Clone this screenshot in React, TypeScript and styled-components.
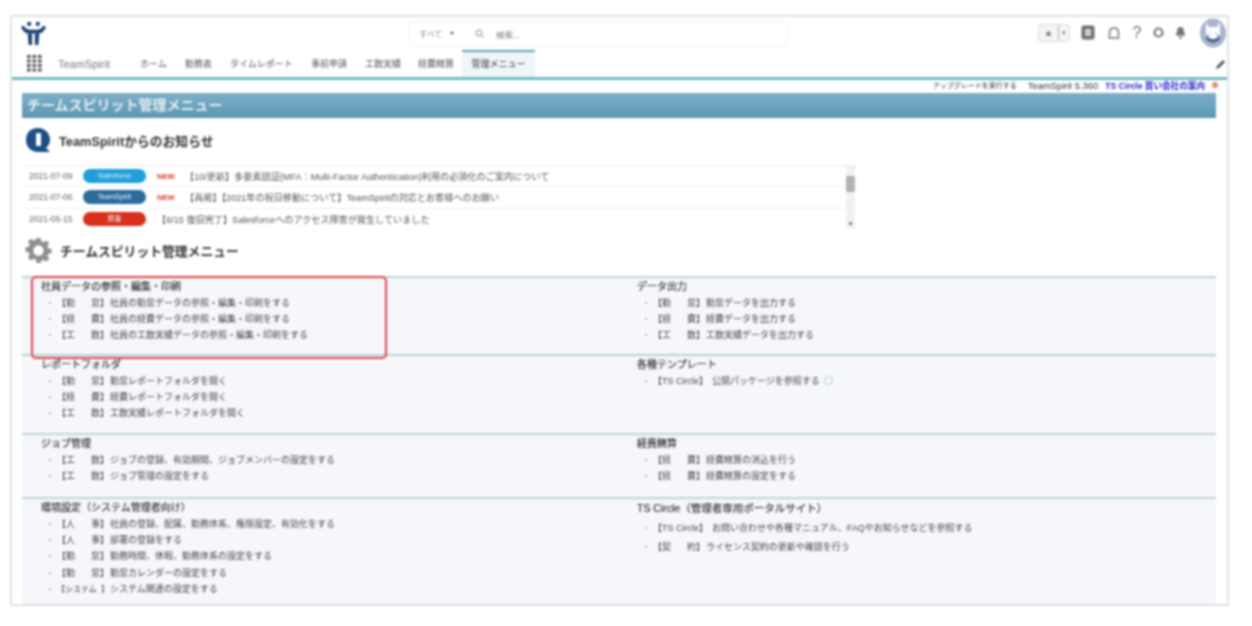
import React from "react";
import styled, { createGlobalStyle } from "styled-components";

const Global = createGlobalStyle`
  html, body { margin: 0; padding: 0; background: #fff; }
  body { font-family: "Liberation Sans", "Noto Sans CJK JP", sans-serif; overflow: hidden; }
`;

const Page = styled.div`
  width: 1252px;
  height: 626px;
  padding: 15px 0 0 10px;
  box-sizing: border-box;
  position: relative;
  filter: blur(1.05px);
`;
const Frame = styled.div`
  width: 1219px;
  height: 591px;
  box-sizing: border-box;
  border: 2px solid #e2e2e2;
  display: flex;
  flex-direction: column;
  overflow: hidden;
`;
const TopBar = styled.header`
  height: 33px;
  display: grid;
  grid-template-columns: 396px 380px 1fr;
  align-items: center;
  box-sizing: border-box;
`;
const Logo = styled.div`
  padding-left: 8px;
  display: flex;
  align-items: center;
`;
const Search = styled.div`
  height: 25px;
  border: 1px solid #f4f4f4;
  border-radius: 3px;
  display: flex;
  align-items: center;
  font-size: 8px;
  color: #8a8a8a;
  background: #fff;
  box-sizing: border-box;
`;
const ScopeLabel = styled.span`
  margin-left: 10px;
  width: 31px;
`;
const Caret = styled.span`
  width: 0;
  height: 0;
  border-left: 2.5px solid transparent;
  border-right: 2.5px solid transparent;
  border-top: 3.5px solid #555;
  margin-right: 21px;
`;
const SearchText = styled.span`
  margin-left: 11px;
  font-size: 8.5px;
  color: #777;
`;
const Tools = styled.div`
  display: flex;
  align-items: center;
  justify-content: flex-end;
  padding-bottom: 2px;
`;
const FavGroup = styled.div`
  width: 32px;
  height: 18px;
  border: 1px solid #ddd;
  border-radius: 3px;
  background: #f5f5f5;
  display: grid;
  grid-template-columns: 1fr 11px;
  align-items: center;
  justify-items: center;
  box-sizing: border-box;
  margin-right: 11px;
  color: #777;
  font-size: 8px;
`;
const FavDivider = styled.span`
  border-left: 1px solid #aaa;
  width: 100%;
  height: 14px;
  display: flex;
  align-items: center;
  justify-content: center;
  box-sizing: border-box;
  font-size: 7px;
`;
const Tool = styled.span<{ $w: number; $ml?: number }>`
  width: ${(p) => p.$w}px;
  margin-left: ${(p) => p.$ml ?? 0}px;
  display: flex;
  justify-content: center;
  align-items: center;
  color: #727272;
  font-size: 16px;
`;
const NavRow = styled.nav`
  height: 27px;
  display: flex;
  align-items: stretch;
  position: relative;
`;
const Waffle = styled.div`
  margin-left: 15px;
  width: 15px;
  display: flex;
  align-items: center;
`;
const AppName = styled.span`
  margin-left: 16px;
  width: 82px;
  align-self: center;
  font-size: 11px;
  color: #777;
`;
const Tab = styled.span<{ $w: number; $active?: boolean }>`
  width: ${(p) => p.$w}px;
  box-sizing: border-box;
  display: flex;
  align-items: center;
  justify-content: ${(p) => (p.$active ? "center" : "flex-start")};
  font-size: 9px;
  color: ${(p) => (p.$active ? "#333" : "#555")};
  border-top: 2px solid ${(p) => (p.$active ? "#5ba4bd" : "transparent")};
  background: ${(p) => (p.$active ? "#eef6f9" : "transparent")};
  padding-bottom: 3px;
`;
const Pencil = styled.span`
  position: absolute;
  right: 2px;
  top: 10px;
  display: flex;
`;
const TealLine = styled.div`
  height: 3px;
  background: #74b9c2;
  flex: none;
`;
const VersionRow = styled.div`
  height: 13px;
  display: flex;
  justify-content: flex-end;
  align-items: center;
  gap: 11px;
  padding: 0 9px 3px 0;
  box-sizing: border-box;
  font-size: 7px;
  color: #333;
  flex: none;
`;
const VersionNumber = styled.span`
  font-size: 9.4px;
  margin-right: -4px;
`;
const VersionLink = styled.span`
  color: #2222cc;
  font-size: 8.6px;
  font-weight: 700;
`;
const Dot = styled.i`
  width: 6px;
  height: 6px;
  border-radius: 50%;
  background: #ef8b6e;
  margin-left: -4px;
`;
const TitleBar = styled.h1`
  margin: 0 11px 0 10px;
  height: 25px;
  flex: none;
  background: linear-gradient(#7fafc8, #5b97b5);
  color: #e4eef3;
  font-size: 14px;
  font-weight: 700;
  line-height: 25px;
  padding-left: 5px;
`;
const Heading = styled.div<{ $top: number; $bottom: number }>`
  display: flex;
  align-items: center;
  gap: 8px;
  margin: ${(p) => p.$top}px 0 ${(p) => p.$bottom}px 13px;
  height: 28px;
  font-size: 12.8px;
  font-weight: 700;
  color: #333;
  flex: none;
`;
const NewsBox = styled.div`
  width: 834px;
  margin-left: 12px;
  height: 64px;
  display: flex;
  flex: none;
  overflow: hidden;
  border-top: 1px solid #eee;
  box-sizing: border-box;
`;
const NewsList = styled.div`
  width: 822px;
`;
const NewsRow = styled.div`
  height: 21.3px;
  box-sizing: border-box;
  border-bottom: 1px solid #efefef;
  display: flex;
  align-items: center;
  padding-left: 5px;
  font-size: 9.15px;
  color: #555;
  white-space: nowrap;
`;
const NewsDate = styled.span`
  width: 54px;
  font-size: 8.5px;
  color: #666;
`;
const Pill = styled.span<{ $bg: string }>`
  width: 63px;
  height: 14px;
  border-radius: 7px;
  background: ${(p) => p.$bg};
  color: #e8f0f6;
  font-size: 7px;
  line-height: 14px;
  text-align: center;
  margin-right: 11px;
`;
const NewTag = styled.span`
  color: #d93a2b;
  font-size: 7.5px;
  font-weight: 700;
  width: 28px;
`;
const Scroll = styled.div`
  width: 9px;
  background: #f1f1f1;
  display: flex;
  flex-direction: column;
  align-items: stretch;
  padding: 10px 0 4px;
  box-sizing: border-box;
  justify-content: space-between;
`;
const Thumb = styled.div`
  height: 16px;
  background: #b2b2b2;
  border-radius: 1px;
`;
const ScrollArrow = styled.div`
  width: 3px;
  height: 3px;
  background: #888;
  align-self: center;
`;
const Sections = styled.div`
  margin: 1px 11px 0 10px;
  flex: 1;
  display: flex;
  flex-direction: column;
`;
const Section = styled.section<{ $h?: number; $line: string }>`
  ${(p) => (p.$h ? `height: ${p.$h}px; flex: none;` : "flex: 1;")}
  border-top: 2px solid ${(p) => p.$line};
  background: #f5f7fa;
  box-sizing: border-box;
  display: grid;
  grid-template-columns: 596px 1fr;
`;
const Col = styled.div`
  padding: 2px 0 0 19px;
`;
const ColTitle = styled.div<{ $big?: boolean }>`
  font-size: ${(p) => (p.$big ? "10.5px" : "10px")};
  margin-bottom: ${(p) => (p.$big ? "3px" : "0")};
  -webkit-text-stroke: 0.2px #333;
  color: #333;
  height: 14px;
  line-height: 14px;
`;
const Items = styled.ul`
  list-style: none;
  margin: 0;
  padding: 0 0 0 5px;
`;
const Item = styled.li<{ $h?: number }>`
  height: ${(p) => p.$h ?? 16.35}px;
  display: flex;
  align-items: center;
  font-size: 9px;
  color: #444;
  white-space: nowrap;
`;
const Bullet = styled.span`
  width: 11px;
  font-size: 8px;
  color: #888;
`;
const Tag = styled.span<{ $wide?: boolean; $tight?: boolean }>`
  width: ${(p) => (p.$wide ? "auto" : "52px")};
  margin-right: ${(p) => (p.$wide ? "4px" : "1px")};
  display: flex;
  justify-content: space-between;
  font-size: ${(p) => (p.$tight ? "8px" : "inherit")};
`;
const Ext = styled.span`
  width: 7px;
  height: 7px;
  border: 1px solid #a9d4c4;
  border-radius: 50%;
  margin-left: 4px;
`;
const RedBox = styled.div`
  position: absolute;
  left: 31px;
  top: 276px;
  width: 356px;
  height: 83px;
  box-sizing: border-box;
  border: 2px solid #e8404e;
  border-radius: 5px;
`;

type Row = { a?: string; b?: string; wide?: string; tight?: boolean; t: string; ext?: boolean };

const kin = { a: "【勤", b: "怠】" };
const kei = { a: "【経", b: "費】" };
const kou = { a: "【工", b: "数】" };
const jin = { a: "【人", b: "事】" };

const MenuItem = ({ r, h }: { r: Row; h?: number }) => (
  <Item $h={h}>
    <Bullet>・</Bullet>
    {r.wide ? (
      <Tag $wide>{r.wide}</Tag>
    ) : (
      <Tag $tight={r.tight}>
        <span>{r.a}</span>
        <span>{r.b}</span>
      </Tag>
    )}
    {r.t}
    {r.ext && <Ext />}
  </Item>
);

const Column = ({ title, rows, h, big }: { title: string; rows: Row[]; h?: number; big?: boolean }) => (
  <Col>
    <ColTitle $big={big}>{title}</ColTitle>
    <Items>
      {rows.map((r) => (
        <MenuItem key={r.t} r={r} h={h} />
      ))}
    </Items>
  </Col>
);

const Icon = styled.svg`
  display: block;
  flex: none;
`;

const TsLogo = () => (
  <Icon width="27" height="25" viewBox="0 0 28 26" fill="#1c3f6e">
    <circle cx="9.5" cy="3" r="2.2" />
    <circle cx="18.5" cy="3" r="2.2" />
    <path d="M1 6 L4 5 Q6 9 10 9 H18 Q22 9 24 5 L27 6 Q25 12 20 13 H8 Q3 12 1 6Z" />
    <path d="M8 13 H12.5 V25 H9 Z M15.5 13 H20 L19 25 H15.5 Z" />
  </Icon>
);

const Grid9 = () => (
  <Icon width="15" height="17" viewBox="0 0 15 17" fill="#555">
    {[0, 1, 2, 3].flatMap((y) =>
      [0, 1, 2].map((x) => <rect key={`${x}-${y}`} x={x * 5.5} y={y * 4.5} width="3.6" height="3" />)
    )}
  </Icon>
);

const InfoBubble = () => (
  <Icon width="26" height="26" viewBox="0 0 26 26">
    <path d="M13 1 C5 1 1 6 1 13 C1 20 6 25 13 25 L25 25 L21 21 C24 18 25 16 25 13 C25 6 20 1 13 1Z" fill="#1c4f85" />
    <rect x="11" y="6" width="5" height="13" rx="1" fill="#fff" />
  </Icon>
);

const Gear = () => (
  <Icon width="27" height="27" viewBox="0 0 24 24" fill="#8f8f8f">
    <path d="M10 1h4l.6 3.2 2.2.9 2.7-1.8 2.8 2.8-1.8 2.7.9 2.2 3.2.6v4l-3.2.6-.9 2.2 1.8 2.7-2.8 2.8-2.7-1.8-2.2.9L14 25h-4l-.6-3.2-2.2-.9-2.7 1.8-2.8-2.8 1.8-2.7-.9-2.2L-.6 14v-4l3.2-.6.9-2.2-1.8-2.7 2.8-2.8 2.7 1.8 2.2-.9z" transform="translate(1 0) scale(.92)" />
    <circle cx="12" cy="12" r="4.6" fill="#fff" />
  </Icon>
);

const SearchGlass = () => (
  <Icon width="10" height="10" viewBox="0 0 10 10" fill="none" stroke="#888" strokeWidth="1">
    <circle cx="4" cy="4" r="3" />
    <path d="M6.2 6.2 9 9" />
  </Icon>
);

const AddBox = () => (
  <Icon width="14" height="15" viewBox="0 0 14 15" fill="#6f6f6f">
    <rect x="0.5" y="0.5" width="13" height="14" rx="2" />
    <rect x="4" y="4" width="6" height="7" fill="#cfcfcf" />
  </Icon>
);

const Helper = () => (
  <Icon width="14" height="14" viewBox="0 0 14 14" fill="none" stroke="#777" strokeWidth="1.5">
    <path d="M2.5 12 V7 Q2.5 2 7 2 Q11.5 2 11.5 7 V12 Z" />
  </Icon>
);

const Cog = () => (
  <Icon width="13" height="13" viewBox="0 0 13 13" fill="none" stroke="#777" strokeWidth="2.2">
    <circle cx="6.5" cy="6.5" r="4" />
  </Icon>
);

const Bell = () => (
  <Icon width="13" height="13" viewBox="0 0 13 13" fill="#747474">
    <path d="M6.5 1 C4 1 3 3 3 6 L1.5 9.5 H11.5 L10 6 C10 3 9 1 6.5 1Z" />
    <rect x="5" y="10.5" width="3" height="2" />
  </Icon>
);

const Avatar = () => (
  <Icon width="26" height="30" viewBox="0 0 26 30">
    <ellipse cx="13" cy="15" rx="13" ry="14.5" fill="#a9b5cc" />
    <path d="M6 4 L9 9 H17 L20 4 V19 Q20 25 13 25 Q6 25 6 19Z" fill="#fff" />
    <ellipse cx="13" cy="20" rx="7" ry="5" fill="#4f6893" />
    <ellipse cx="13" cy="18" rx="5" ry="3" fill="#fff" />
  </Icon>
);

const PencilIcon = () => (
  <Icon width="9" height="9" viewBox="0 0 9 9" fill="#555">
    <path d="M7 0 L9 2 L3 8 L0 9 L1 6Z" />
  </Icon>
);

export default function App() {
  return (
    <>
      <Global />
      <Page>
        <Frame>
          <TopBar>
            <Logo>
              <TsLogo />
            </Logo>
            <Search>
              <ScopeLabel>すべて</ScopeLabel>
              <Caret />
              <SearchGlass />
              <SearchText>検索...</SearchText>
            </Search>
            <Tools>
              <FavGroup>
                ★<FavDivider>▾</FavDivider>
              </FavGroup>
              <Tool $w={14}>
                <AddBox />
              </Tool>
              <Tool $w={38}>
                <Helper />
              </Tool>
              <Tool $w={8}>?</Tool>
              <Tool $w={34}>
                <Cog />
              </Tool>
              <Tool $w={10}>
                <Bell />
              </Tool>
              <Tool $w={28} $ml={14}>
                <Avatar />
              </Tool>
            </Tools>
          </TopBar>
          <NavRow>
            <Waffle>
              <Grid9 />
            </Waffle>
            <AppName>TeamSpirit</AppName>
            <Tab $w={45}>ホーム</Tab>
            <Tab $w={45}>勤務表</Tab>
            <Tab $w={81}>タイムレポート</Tab>
            <Tab $w={54}>事前申請</Tab>
            <Tab $w={53}>工数実績</Tab>
            <Tab $w={44}>経費精算</Tab>
            <Tab $w={73} $active>
              管理メニュー
            </Tab>
            <Pencil>
              <PencilIcon />
            </Pencil>
          </NavRow>
          <TealLine />
          <VersionRow>
            <span>アップグレードを実行する</span>
            <VersionNumber>TeamSpirit 5.360</VersionNumber>
            <VersionLink>TS Circle 買い会社の案内</VersionLink>
            <Dot />
          </VersionRow>
          <TitleBar>チームスピリット管理メニュー</TitleBar>
          <Heading $top={8} $bottom={11}>
            <InfoBubble />
            TeamSpiritからのお知らせ
          </Heading>
          <NewsBox>
            <NewsList>
              <NewsRow>
                <NewsDate>2021-07-09</NewsDate>
                <Pill $bg="#1f9fdc">Salesforce</Pill>
                <NewTag>NEW</NewTag>
                【10/更新】多要素認証(MFA：Multi-Factor Authentication)利用の必須化のご案内について
              </NewsRow>
              <NewsRow>
                <NewsDate>2021-07-06</NewsDate>
                <Pill $bg="#2b6c9c">TeamSpirit</Pill>
                <NewTag>NEW</NewTag>
                【再掲】【2021年の祝日移動について】TeamSpiritの対応とお客様へのお願い
              </NewsRow>
              <NewsRow>
                <NewsDate>2021-06-15</NewsDate>
                <Pill $bg="#d9301c">障害</Pill>
                【6/15 復旧完了】Salesforceへのアクセス障害が発生していました
              </NewsRow>
            </NewsList>
            <Scroll>
              <Thumb />
              <ScrollArrow />
            </Scroll>
          </NewsBox>
          <Heading $top={7} $bottom={11}>
            <Gear />
            チームスピリット管理メニュー
          </Heading>
          <Sections>
            <Section $h={78} $line="#bcd6d8">
              <Column
                title="社員データの参照・編集・印刷"
                rows={[
                  { ...kin, t: "社員の勤怠データの参照・編集・印刷をする" },
                  { ...kei, t: "社員の経費データの参照・編集・印刷をする" },
                  { ...kou, t: "社員の工数実績データの参照・編集・印刷をする" },
                ]}
              />
              <Column
                title="データ出力"
                rows={[
                  { ...kin, t: "勤怠データを出力する" },
                  { ...kei, t: "経費データを出力する" },
                  { ...kou, t: "工数実績データを出力する" },
                ]}
              />
            </Section>
            <Section $h={79} $line="#b5d4d2">
              <Column
                title="レポートフォルダ"
                rows={[
                  { ...kin, t: "勤怠レポートフォルダを開く" },
                  { ...kei, t: "経費レポートフォルダを開く" },
                  { ...kou, t: "工数実績レポートフォルダを開く" },
                ]}
              />
              <Column
                title="各種テンプレート"
                rows={[{ wide: "【TS Circle】", t: "公開パッケージを参照する", ext: true }]}
              />
            </Section>
            <Section $h={64} $line="#c3d3da">
              <Column
                title="ジョブ管理"
                rows={[
                  { ...kou, t: "ジョブの登録、有効期間、ジョブメンバーの設定をする" },
                  { ...kou, t: "ジョブ管理の設定をする" },
                ]}
              />
              <Column
                title="経費精算"
                rows={[
                  { ...kei, t: "経費精算の消込を行う" },
                  { ...kei, t: "経費精算の設定をする" },
                ]}
              />
            </Section>
            <Section $line="#c3d3da">
              <Column
                title="環境設定（システム管理者向け）"
                rows={[
                  { ...jin, t: "社員の登録、配属、勤務体系、権限設定、有効化をする" },
                  { ...jin, t: "部署の登録をする" },
                  { ...kin, t: "勤務時間、休暇、勤務体系の設定をする" },
                  { ...kin, t: "勤怠カレンダーの設定をする" },
                  { a: "【システム", b: "】", tight: true, t: "システム関連の設定をする" },
                ]}
              />
              <Column
                big
                title="TS Circle（管理者専用ポータルサイト）"
                h={19}
                rows={[
                  { wide: "【TS Circle】", t: "お問い合わせや各種マニュアル、FAQやお知らせなどを参照する" },
                  { a: "【契", b: "約】", t: "ライセンス契約の更新や確認を行う" },
                ]}
              />
            </Section>
          </Sections>
        </Frame>
        <RedBox />
      </Page>
    </>
  );
}
